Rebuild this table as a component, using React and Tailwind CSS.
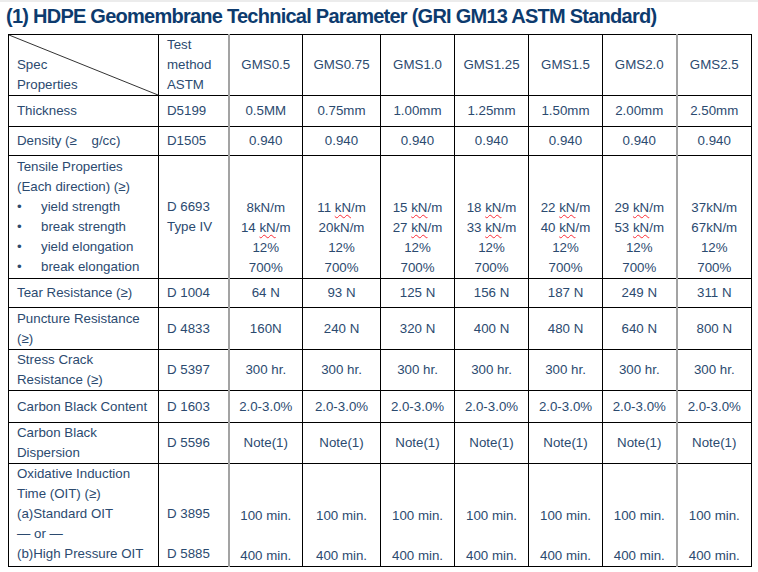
import React from 'react';

const grades = ['GMS0.5', 'GMS0.75', 'GMS1.0', 'GMS1.25', 'GMS1.5', 'GMS2.0', 'GMS2.5'];

// kN gets the red spell-check squiggle in most cells
const Kn = ({ n, gap, wavy }) => (
    <span>
        {n}
        {gap ? ' ' : ''}
        <span className={wavy ? 'underline decoration-wavy decoration-red-500 decoration-1 underline-offset-2' : ''}>kN</span>
        /m
    </span>
);

const tensile = [
    [<Kn n="8" />, <Kn n="14" gap wavy />],
    [<Kn n="11" gap wavy />, <Kn n="20" />],
    [<Kn n="15" gap wavy />, <Kn n="27" gap wavy />],
    [<Kn n="18" gap wavy />, <Kn n="33" gap wavy />],
    [<Kn n="22" gap wavy />, <Kn n="40" gap wavy />],
    [<Kn n="29" gap wavy />, <Kn n="53" gap wavy />],
    [<Kn n="37" />, <Kn n="67" />],
];

const simpleRows = {
    thickness: ['0.5MM', '0.75mm', '1.00mm', '1.25mm', '1.50mm', '2.00mm', '2.50mm'],
    density: Array(7).fill('0.940'),
    tear: ['64 N', '93 N', '125 N', '156 N', '187 N', '249 N', '311 N'],
    puncture: ['160N', '240 N', '320 N', '400 N', '480 N', '640 N', '800 N'],
    stress: Array(7).fill('300 hr.'),
    carbon: Array(7).fill('2.0-3.0%'),
    dispersion: Array(7).fill('Note(1)'),
};

// columns 3 and 9 have the lighter, heavier rule on their left
const valCls = (i) =>
    'border border-black text-center align-middle ' +
    (i === 0 || i === 6 ? 'border-l-2 border-l-[#a3a3a3]' : '');

const labelCls = 'border border-black pl-2 pr-1 align-middle';
const methodCls = 'border border-black pl-2 align-middle';

const ValueCells = ({ values }) =>
    values.map((v, i) => (
        <td key={i} className={valCls(i)}>
            {v}
        </td>
    ));

export default function App() {
    return (
        <div
            className="bg-white min-h-[572px] w-[758px] text-[#2b4a6f]"
            style={{ fontFamily: '"Liberation Sans", Arial, sans-serif' }}
        >
            <div className="h-[2px] bg-[#ececec]" />
            <div className="h-[28px] leading-[28px] pl-[6px] text-[20px] font-bold tracking-[-0.75px] text-[#0d3b6e] whitespace-nowrap">
                (1) HDPE Geomembrane Technical Parameter (GRI GM13 ASTM Standard)
            </div>
            <div className="pt-[4px] pl-[8px]">
                <table className="table-fixed border-collapse w-[743px] text-[13.3px] leading-[20px]">
                    <colgroup>
                        <col className="w-[150px]" />
                        <col className="w-[70px]" />
                        <col className="w-[74px]" />
                        <col className="w-[78px]" />
                        <col className="w-[74px]" />
                        <col className="w-[74px]" />
                        <col className="w-[74px]" />
                        <col className="w-[74px]" />
                        <col className="w-[75px]" />
                    </colgroup>
                    <tbody>
                        <tr className="h-[61px]">
                            <td className="border border-black pl-2 align-bottom relative">
                                <svg className="absolute inset-0 w-full h-full" preserveAspectRatio="none" viewBox="0 0 100 100">
                                    <line x1="0" y1="0" x2="100" y2="100" stroke="#333" strokeWidth="1" vectorEffect="non-scaling-stroke" />
                                </svg>
                                <div>Spec</div>
                                <div>Properties</div>
                            </td>
                            <td className={methodCls}>
                                <div>Test</div>
                                <div>method</div>
                                <div>ASTM</div>
                            </td>
                            <ValueCells values={grades} />
                        </tr>
                        <tr className="h-[31px]">
                            <td className={labelCls}>Thickness</td>
                            <td className={methodCls}>D5199</td>
                            <ValueCells values={simpleRows.thickness} />
                        </tr>
                        <tr className="h-[29px]">
                            <td className={labelCls}>Density (≥&nbsp;&nbsp;&nbsp; g/cc)</td>
                            <td className={methodCls}>D1505</td>
                            <ValueCells values={simpleRows.density} />
                        </tr>
                        <tr className="h-[123px]">
                            <td className="border border-black pl-2 align-top pt-px">
                                <div>Tensile Properties</div>
                                <div>(Each direction) (≥)</div>
                                {['yield strength', 'break strength', 'yield elongation', 'break elongation'].map((t) => (
                                    <div key={t} className="flex">
                                        <span className="w-[24px]">•</span>
                                        <span>{t}</span>
                                    </div>
                                ))}
                            </td>
                            <td className="border border-black pl-2 align-top pt-[41px]">
                                <div>D 6693</div>
                                <div>Type IV</div>
                            </td>
                            {tensile.map((pair, i) => (
                                <td key={i} className={valCls(i) + ' !align-bottom'}>
                                    <div>{pair[0]}</div>
                                    <div>{pair[1]}</div>
                                    <div>12%</div>
                                    <div>700%</div>
                                </td>
                            ))}
                        </tr>
                        <tr className="h-[29px]">
                            <td className={labelCls}>Tear Resistance (≥)</td>
                            <td className={methodCls}>D 1004</td>
                            <ValueCells values={simpleRows.tear} />
                        </tr>
                        <tr className="h-[42px]">
                            <td className={labelCls}>
                                <div>Puncture Resistance</div>
                                <div>(≥)</div>
                            </td>
                            <td className={methodCls}>D 4833</td>
                            <ValueCells values={simpleRows.puncture} />
                        </tr>
                        <tr className="h-[41px]">
                            <td className={labelCls}>
                                <div>Stress Crack</div>
                                <div>Resistance (≥)</div>
                            </td>
                            <td className={methodCls}>D 5397</td>
                            <ValueCells values={simpleRows.stress} />
                        </tr>
                        <tr className="h-[32px]">
                            <td className={labelCls}>Carbon Black Content</td>
                            <td className={methodCls}>D 1603</td>
                            <ValueCells values={simpleRows.carbon} />
                        </tr>
                        <tr className="h-[41px]">
                            <td className={labelCls}>
                                <div>Carbon Black</div>
                                <div>Dispersion</div>
                            </td>
                            <td className={methodCls}>D 5596</td>
                            <ValueCells values={simpleRows.dispersion} />
                        </tr>
                        <tr className="h-[102px]">
                            <td className="border border-black pl-2 align-top">
                                <div>Oxidative Induction</div>
                                <div>Time (OIT) (≥)</div>
                                <div>(a)Standard OIT</div>
                                <div>— or —</div>
                                <div>(b)High Pressure OIT</div>
                            </td>
                            <td className="border border-black pl-2 align-top pt-[40px]">
                                <div>D 3895</div>
                                <div className="mt-[20px]">D 5885</div>
                            </td>
                            {grades.map((g, i) => (
                                <td key={g} className={valCls(i) + ' !align-top pt-[42px]'}>
                                    <div>100 min.</div>
                                    <div className="mt-[20px]">400 min.</div>
                                </td>
                            ))}
                        </tr>
                    </tbody>
                </table>
            </div>
        </div>
    );
}
